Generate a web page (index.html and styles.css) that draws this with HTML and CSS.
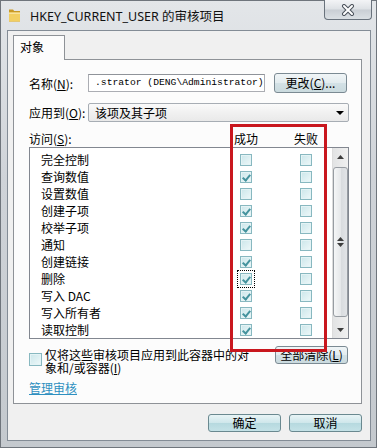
FILE: index.html
```html
<!DOCTYPE html>
<html lang="zh-CN">
<head>
  <meta charset="UTF-8">
  <title>HKEY_CURRENT_USER 的审核项目</title>
  <link rel="stylesheet" href="styles.css">
</head>
<body>
  <div class="window">
    <div class="titlebar">
      <svg class="folder-icon" width="13" height="14" viewBox="0 0 13 14">
        <path d="M1 1.5h4l1.2 1.5H12v10.5H1z" fill="#c99a26"/>
        <path d="M1 4.5h11v9H1z" fill="#f2cf62"/>
        <path d="M1 4.5h11v1.5H1z" fill="#f9e39a"/>
      </svg>
      <span class="title">HKEY_CURRENT_USER 的审核项目</span>
      <div class="close">
        <svg width="16" height="12" viewBox="0 0 16 12">
          <path d="M4 2l8 8M12 2l-8 8" stroke="#4b525b" stroke-width="4" stroke-linecap="round"/>
          <path d="M4 2l8 8M12 2l-8 8" stroke="#fff" stroke-width="2" stroke-linecap="round"/>
        </svg>
      </div>
    </div>

    <div class="client">
      <div class="tabs">
        <div class="tab">对象</div>
      </div>

      <div class="panel">
        <div class="row name-row">
          <span class="lbl">名称(<u>N</u>):</span>
          <div class="textbox">.strator (DENG\Administrator)</div>
          <button class="btn btn-change">更改(<u>C</u>)...</button>
        </div>

        <div class="row apply-row">
          <span class="lbl">应用到(<u>O</u>):</span>
          <div class="combo">
            <span>该项及其子项</span>
            <svg class="combo-arrow" width="8" height="4" viewBox="0 0 8 4"><path d="M0 0h8L4 4z" fill="#000"/></svg>
          </div>
        </div>

        <div class="row access-head">
          <span class="lbl-access">访问(<u>S</u>):</span>
          <span class="hcol">成功</span>
          <span class="hcol">失败</span>
        </div>

        <div class="listbox">
          <div class="rows">
            <div class="item"><span class="item-name">完全控制</span><span class="cell"><span class="cb"></span></span><span class="cell"><span class="cb"></span></span></div>
            <div class="item"><span class="item-name">查询数值</span><span class="cell"><span class="cb on"></span></span><span class="cell"><span class="cb"></span></span></div>
            <div class="item"><span class="item-name">设置数值</span><span class="cell"><span class="cb"></span></span><span class="cell"><span class="cb"></span></span></div>
            <div class="item"><span class="item-name">创建子项</span><span class="cell"><span class="cb on"></span></span><span class="cell"><span class="cb"></span></span></div>
            <div class="item"><span class="item-name">校举子项</span><span class="cell"><span class="cb on"></span></span><span class="cell"><span class="cb"></span></span></div>
            <div class="item"><span class="item-name">通知</span><span class="cell"><span class="cb"></span></span><span class="cell"><span class="cb"></span></span></div>
            <div class="item"><span class="item-name">创建链接</span><span class="cell"><span class="cb on"></span></span><span class="cell"><span class="cb"></span></span></div>
            <div class="item"><span class="item-name">删除</span><span class="cell"><span class="cb on focused"></span></span><span class="cell"><span class="cb"></span></span></div>
            <div class="item"><span class="item-name">写入 DAC</span><span class="cell"><span class="cb on"></span></span><span class="cell"><span class="cb"></span></span></div>
            <div class="item"><span class="item-name">写入所有者</span><span class="cell"><span class="cb on"></span></span><span class="cell"><span class="cb"></span></span></div>
            <div class="item"><span class="item-name">读取控制</span><span class="cell"><span class="cb on"></span></span><span class="cell"><span class="cb"></span></span></div>
          </div>
          <div class="scrollbar">
            <div class="sb-arrow">
              <svg width="7" height="4" viewBox="0 0 7 4"><path d="M0 4h7L3.5 0z" fill="#3c3c3c"/></svg>
            </div>
            <div class="thumb">
              <svg width="7" height="10" viewBox="0 0 7 10"><path d="M0 4h7L3.5 0z M0 6h7L3.5 10z" fill="#3c3c3c"/></svg>
            </div>
            <div class="sb-arrow down">
              <svg width="7" height="4" viewBox="0 0 7 4"><path d="M0 0h7L3.5 4z" fill="#3c3c3c"/></svg>
            </div>
          </div>
        </div>

        <div class="row bottom-row">
          <span class="cb big"></span>
          <span class="scope-text">
            <span class="scope-line">仅将这些审核项目应用到此容器中的对</span>
            <span class="scope-line">象和/或容器(<u>I</u>)</span>
          </span>
          <button class="btn btn-clear">全部清除(<u>L</u>)</button>
        </div>

        <a class="manage-link" href="#">管理审核</a>

        <div class="highlight"></div>
      </div>

      <div class="dialog-buttons">
        <button class="btn btn-dlg">确定</button>
        <button class="btn btn-dlg">取消</button>
      </div>
    </div>
  </div>
</body>
</html>
```

FILE: styles.css
```css
* {
  box-sizing: border-box;
}
body {
  margin: 0;
  font-family: "Noto Sans CJK SC", "Noto Sans", sans-serif;
  font-size: 12px;
  color: #000;
}
u {
  text-decoration: underline;
}

.window {
  width: 377px;
  height: 448px;
  display: flex;
  flex-direction: column;
  padding: 0 6px 7px 7px;
  background: linear-gradient(#e3e6e9, #cfd3d8 40%, #c4c9ce);
  box-shadow: inset 0 0 0 1px #6f757c;
}

/* title bar */
.titlebar {
  height: 30px;
  flex: none;
  display: flex;
  align-items: center;
}
.folder-icon {
  margin-left: 1px;
  margin-top: -1px;
}
.title {
  margin-left: 9px;
  font-family: "Noto Sans", "Noto Sans CJK SC", sans-serif;
  font-size: 12.5px;
  color: #111;
}
.close {
  margin-left: auto;
  margin-right: -1px;
  align-self: flex-start;
  width: 48px;
  height: 20px;
  border: 1px solid #69727c;
  border-top: none;
  border-radius: 0 0 4px 4px;
  background: linear-gradient(#f3f4f6, #dde1e5 48%, #c9ced4 52%, #dbe0e4);
  display: flex;
  align-items: center;
  justify-content: center;
}

/* client area */
.client {
  flex: 1;
  display: flex;
  flex-direction: column;
  border: 1px solid #838c96;
  background: #f0f0f0;
  padding: 4px 8px 7px 5px;
}
.tabs {
  display: flex;
}
.tab {
  width: 52px;
  height: 25px;
  margin-bottom: -1px;
  border: 1px solid #8e9297;
  border-bottom: none;
  background: #fcfcfc;
  padding: 2px 0 0 6px;
  line-height: 18px;
  position: relative;
  z-index: 1;
}
.panel {
  height: 345px;
  flex: none;
  border: 1px solid #8e9297;
  background: #fcfcfc;
  padding: 0 12px 0 15px;
  display: flex;
  flex-direction: column;
  position: relative;
}

.row {
  display: flex;
  align-items: center;
}
.lbl {
  width: 59px;
  flex: none;
}

.btn {
  font: inherit;
  color: #000;
  padding: 0;
  line-height: 16px;
  border: 1px solid #7b8a93;
  border-radius: 3px;
  background: linear-gradient(#f0f5f7, #e3ecef 48%, #d3e1e6 52%, #cadade);
}

.name-row {
  margin-top: 13px;
  height: 20px;
}
.textbox {
  width: 177px;
  height: 18px;
  border: 1px solid #abadb3;
  border-top-color: #8f9399;
  background: #fff;
  padding-left: 6px;
  font-family: "Liberation Mono", monospace;
  font-size: 9.7px;
  line-height: 16px;
  white-space: nowrap;
  overflow: hidden;
}
.btn-change {
  margin-left: 9px;
  width: 73px;
  height: 20px;
}

.apply-row {
  margin-top: 10px;
  height: 19px;
}
.combo {
  flex: 1;
  height: 19px;
  border: 1px solid #a7adb4;
  border-radius: 2px;
  background: linear-gradient(#fafafa, #f1f1f1 50%, #e9e9e9);
  padding-left: 6px;
  display: flex;
  align-items: center;
}
.combo-arrow {
  margin-left: auto;
  margin-right: 4px;
}

.access-head {
  margin-top: 7px;
  height: 18px;
  padding-right: 31px;
}
.lbl-access {
  flex: 1;
}
.hcol {
  width: 24px;
  text-align: center;
}
.hcol + .hcol {
  margin-left: 36px;
}

/* list */
.listbox {
  height: 192px;
  flex: none;
  border: 1px solid #828790;
  background: #fff;
  display: flex;
}
.rows {
  flex: 1;
  padding-top: 3px;
}
.item {
  height: 17px;
  display: flex;
  align-items: center;
  padding: 0 14px 0 11px;
}
.item-name {
  flex: 1;
}
.cell {
  width: 24px;
  display: flex;
  justify-content: center;
}
.cell + .cell {
  margin-left: 36px;
}

.cb {
  display: block;
  width: 12px;
  height: 12px;
  border: 1px solid #88b8c0;
  background: linear-gradient(135deg, #cbe6ea, #eef8f9);
  box-shadow: inset 0 0 0 1px #e4f3f5;
  position: relative;
}
.cb.on::after {
  content: "";
  position: absolute;
  left: 3px;
  top: 1px;
  width: 3px;
  height: 6px;
  border: solid #45939e;
  border-width: 0 2px 2px 0;
  transform: rotate(40deg);
}
.cb.focused {
  outline: 1px dotted #000;
  outline-offset: 2px;
}
.cb.big {
  width: 13px;
  height: 13px;
  flex: none;
  margin-top: 7px;
}

.scrollbar {
  width: 16px;
  flex: none;
  display: flex;
  flex-direction: column;
  align-items: center;
  background: linear-gradient(to right, #e2e3e4, #f0f0f0);
  border-left: 1px solid #dcdcdc;
}
.sb-arrow {
  height: 17px;
  width: 100%;
  display: flex;
  align-items: center;
  justify-content: center;
}
.sb-arrow.down {
  margin-top: auto;
}
.thumb {
  margin-top: 2px;
  width: 15px;
  height: 150px;
  border: 1px solid #979ca2;
  border-radius: 3px;
  background: linear-gradient(to right, #f5f6f7, #e6e8ea 50%, #d8dbde 52%, #e2e4e7);
  display: flex;
  align-items: center;
  justify-content: center;
}

/* bottom of panel */
.bottom-row {
  margin-top: 7px;
  align-items: flex-start;
}
.scope-text {
  width: 212px;
  margin-left: 3px;
  margin-top: 2px;
  line-height: 13px;
  display: flex;
  flex-direction: column;
}
.scope-line {
  white-space: nowrap;
}
.btn-clear {
  margin-left: auto;
  margin-right: 1px;
  width: 73px;
  height: 18px;
}
.manage-link {
  margin-top: 7px;
  align-self: flex-start;
  line-height: 13px;
  color: #2f90c0;
  text-decoration: underline;
}

.highlight {
  position: absolute;
  left: 216px;
  top: 64px;
  width: 97px;
  height: 228px;
  border: 3px solid #c9171e;
}

/* dialog buttons */
.dialog-buttons {
  margin-top: 10px;
  display: flex;
  justify-content: flex-end;
  gap: 8px;
}
.btn-dlg {
  width: 73px;
  height: 18px;
  border-color: #6a8990;
  background: linear-gradient(#e8f4f6, #cfe7eb 48%, #b6d9df 52%, #c4e2e7);
}
```
